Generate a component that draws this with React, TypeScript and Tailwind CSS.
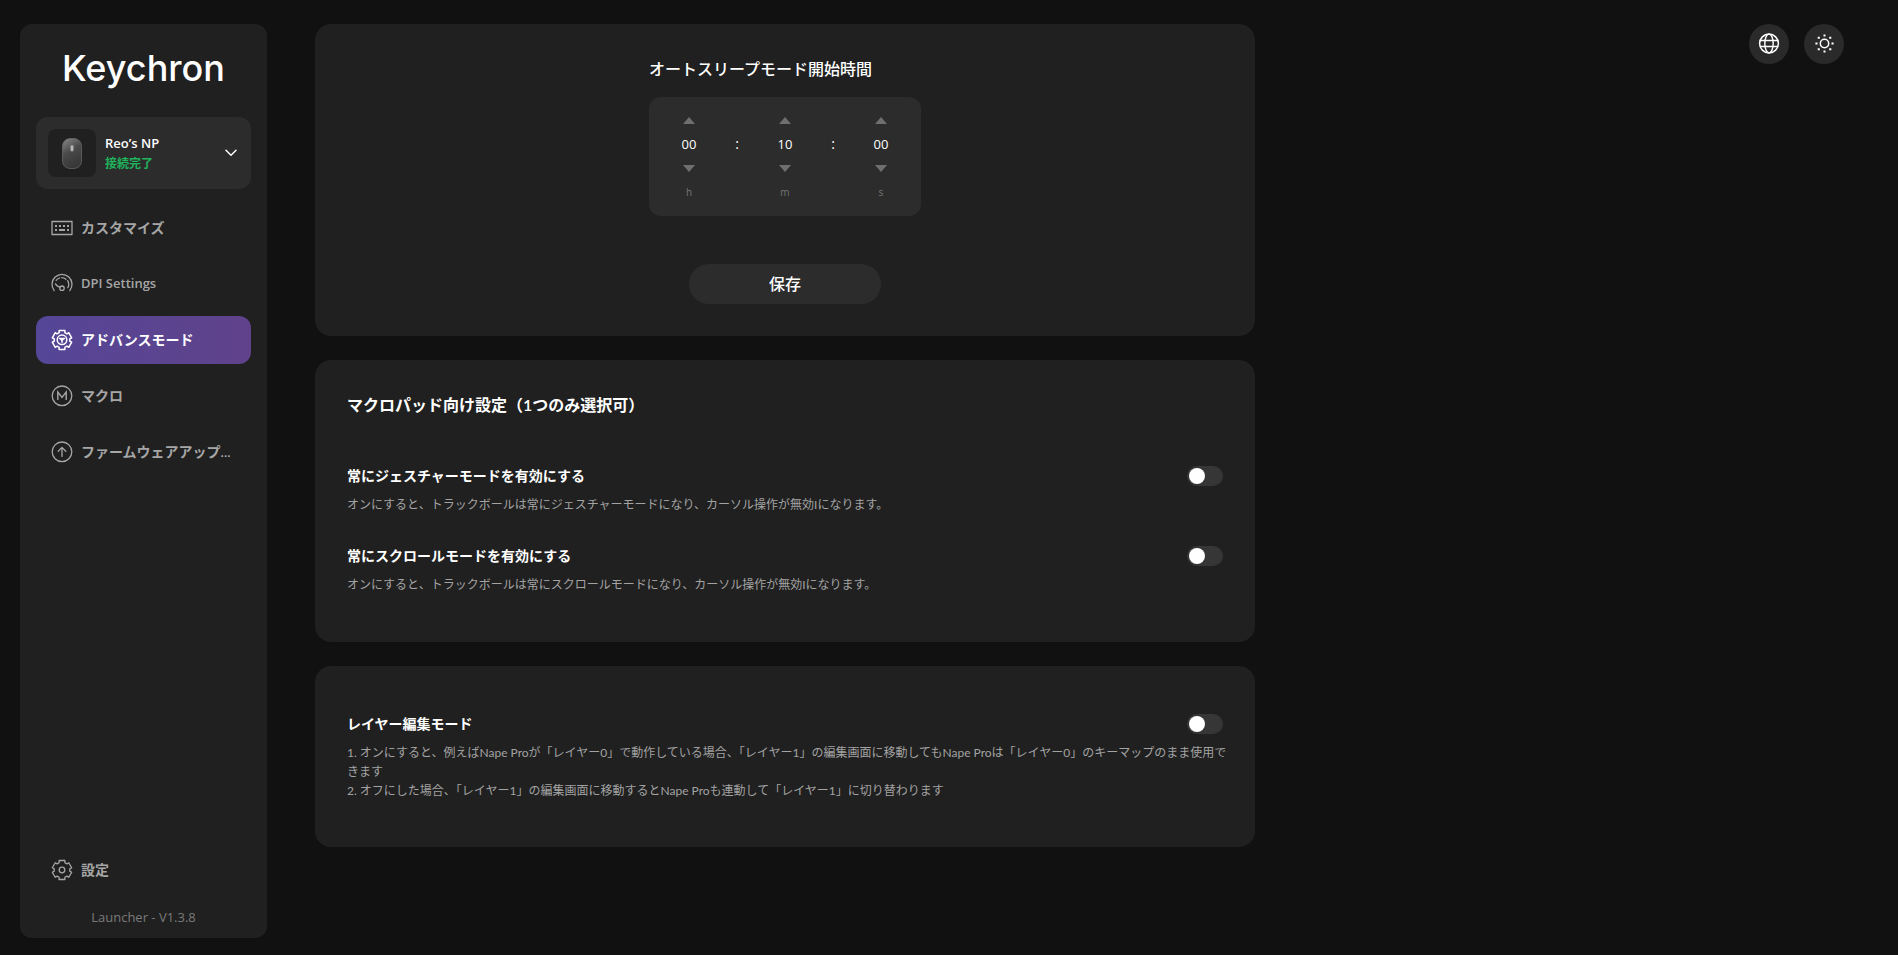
import React, { useState } from 'react';

const GEAR_PATH =
  'M8.1 1.5H13.9V3.7L15.87 4.84L17.78 3.74L20.68 8.76L18.77 9.86V12.14L20.68 13.24L17.78 18.26L15.87 17.16L13.9 18.3V20.5H8.1V18.3L6.13 17.16L4.22 18.26L1.32 13.24L3.23 12.14V9.86L1.32 8.76L4.22 3.74L6.13 4.84L8.1 3.7Z';

const Icon: React.FC<{ children: React.ReactNode }> = ({ children }) => (
  <svg
    viewBox="0 0 22 22"
    className="size-[22px] shrink-0"
    fill="none"
    stroke="currentColor"
    strokeWidth="1.3"
    strokeLinecap="round"
    strokeLinejoin="round"
    aria-hidden="true"
  >
    {children}
  </svg>
);

const KeyboardIcon = () => (
  <Icon>
    <rect x="1" y="4.5" width="20" height="13" />
    <path d="M4 9h2M8 9h2M12 9h2M16 9h2M4 13h2M8 13h6M16 13h2" strokeWidth="1.8" strokeLinecap="butt" />
  </Icon>
);

const GaugeIcon = () => (
  <Icon>
    <path d="M3.2 17.6a10 10 0 1 1 15.6 0" />
    <path d="M5.2 7.4a7 7 0 0 1 3.4-2.4M10.6 4.6a7 7 0 0 1 4.4 1.6M16.6 7.6a7 7 0 0 1 .2 7.2" />
    <circle cx="11" cy="15.2" r="2.2" />
    <path d="M4.4 10.8c.6 1.6 2.2 2.8 4.6 3.4" />
  </Icon>
);

const AdvancedIcon = () => (
  <Icon>
    <path d={GEAR_PATH} strokeWidth="1.5" />
    <circle cx="11" cy="10.8" r="4.8" strokeWidth="1.5" />
    <path d="M8.4 9.6h5.2M11 13.2V11M9.4 9.8l1.6 1.6 1.6-1.6" strokeWidth="1.5" />
  </Icon>
);

const MacroIcon = () => (
  <Icon>
    <circle cx="11" cy="10.8" r="9.8" />
    <path d="M6.8 14.4V7l4.2 5.4L15.2 7v7.4" strokeWidth="1.4" strokeLinejoin="miter" />
  </Icon>
);

const FirmwareIcon = () => (
  <Icon>
    <circle cx="11" cy="10.8" r="9.8" />
    <path d="M11 15.4V6.6M7.2 10.2L11 6.4l3.8 3.8" />
  </Icon>
);

const SettingsIcon = () => (
  <Icon>
    <path d={GEAR_PATH} />
    <circle cx="11" cy="11" r="2.8" />
  </Icon>
);

const GlobeIcon = () => (
  <Icon>
    <circle cx="11" cy="10.5" r="9.4" strokeWidth="1.5" />
    <ellipse cx="11" cy="10.5" rx="4.2" ry="9.4" strokeWidth="1.4" />
    <path d="M2.4 7.5h17.2M2.4 13.5h17.2" />
  </Icon>
);

const SunIcon = () => (
  <Icon>
    <circle cx="11.5" cy="10.5" r="4.2" strokeWidth="1.5" />
    <path
      d="M11.5 2.4v.1M11.5 18.5v.1M3.4 10.5h.1M19.5 10.5h.1M5.7 4.8h.1M17.2 4.8h.1M5.7 16.2h.1M17.2 16.2h.1"
      strokeWidth="2"
      strokeLinecap="square"
    />
  </Icon>
);

const MouseImage = () => (
  <svg viewBox="0 0 20 31" className="h-[31px] w-5" aria-hidden="true">
    <defs>
      <linearGradient id="mouse-body" x1="0" y1="0" x2="0.4" y2="1">
        <stop offset="0" stopColor="#8a8a8a" />
        <stop offset="0.5" stopColor="#4a4a4a" />
        <stop offset="1" stopColor="#383838" />
      </linearGradient>
    </defs>
    <rect x="0.5" y="0.5" width="19" height="30" rx="7.5" fill="url(#mouse-body)" stroke="#6b6b6b" strokeWidth="0.7" />
    <rect x="8.4" y="7" width="3.2" height="6.4" rx="1.6" fill="#b5b5b5" stroke="#777" strokeWidth="0.5" />
  </svg>
);

// Latin labels use Open Sans one step smaller so they sit level with the Japanese ones
const navItems: { label: string; icon: React.FC; active?: boolean; latin?: boolean }[] = [
  { label: 'カスタマイズ', icon: KeyboardIcon },
  { label: 'DPI Settings', icon: GaugeIcon, latin: true },
  { label: 'アドバンスモード', icon: AdvancedIcon, active: true },
  { label: 'マクロ', icon: MacroIcon },
  { label: 'ファームウェアアップ...', icon: FirmwareIcon },
];

const Arrow: React.FC<{ down?: boolean; label: string; onClick: () => void }> = ({ down, label, onClick }) => (
  <button type="button" aria-label={label} onClick={onClick} className="flex h-4 w-full items-center justify-center text-[#6f6f6f]">
    <svg viewBox="0 0 12 7" className="h-[7px] w-3" fill="currentColor" aria-hidden="true">
      <path d={down ? 'M0 0h12L6 7z' : 'M0 7h12L6 0z'} />
    </svg>
  </button>
);

interface TimeFieldProps {
  unit: string;
  label: string;
  initial: number;
  max: number;
}

const TimeField: React.FC<TimeFieldProps> = ({ unit, label, initial, max }) => {
  const [value, setValue] = useState(initial);
  const step = (n: number) => setValue(v => (v + n + max + 1) % (max + 1));

  return (
    <div className="flex w-12 flex-col items-center">
      <Arrow label={`${label} +`} onClick={() => step(1)} />
      <input
        type="text"
        aria-label={label}
        readOnly
        value={value.toString().padStart(2, '0')}
        className="my-1 h-6 w-full bg-transparent text-center text-[13px] text-white outline-none"
      />
      <Arrow down label={`${label} -`} onClick={() => step(-1)} />
      <span className="mt-2 text-[10px] leading-4 text-[#757575]">{unit}</span>
    </div>
  );
};

const Colon = () => <span className="mt-5 w-12 text-center text-sm leading-6">:</span>;

interface ToggleRowProps {
  id: string;
  title: string;
  lines: string[];
}

const ToggleRow: React.FC<ToggleRowProps> = ({ id, title, lines }) => {
  const [checked, setChecked] = useState(false);

  return (
    <div>
      <div className="flex items-center justify-between">
        <label htmlFor={id} className="text-sm leading-5 font-semibold">{title}</label>
        <input
          id={id}
          type="checkbox"
          role="switch"
          checked={checked}
          onChange={e => setChecked(e.target.checked)}
          className="flex h-5 w-9 cursor-pointer appearance-none items-center rounded-full bg-[#363636] px-0.5 before:block before:size-4 before:rounded-full before:bg-white before:transition-transform checked:bg-[#5b4391] checked:before:translate-x-4"
        />
      </div>
      <div className="mt-[9px] -mr-2 text-xs leading-[19px] text-[#a3a3a3]">
        {lines.map(line => (
          <p key={line}>{line}</p>
        ))}
      </div>
    </div>
  );
};

const Sidebar = () => (
  <aside className="flex w-[247px] shrink-0 flex-col rounded-xl bg-[#202020] px-4">
    <div className="mt-5 flex h-[73px] justify-center font-[Inter,sans-serif] text-[36px] leading-[48px] font-medium">Keychron</div>

    <button type="button" className="flex h-[72px] items-center gap-[9px] rounded-xl bg-[#2c2c2c] px-3 text-left">
      <span className="flex size-12 shrink-0 items-center justify-center rounded-lg bg-[#202020]">
        <MouseImage />
      </span>
      <span className="flex min-w-0 flex-1 flex-col">
        <span className="font-['Open_Sans',sans-serif] text-[13px] leading-[22px] font-semibold">Reo’s NP</span>
        <span className="text-xs leading-5 font-bold text-[#1fb35b]">接続完了</span>
      </span>
      <svg viewBox="0 0 12 8" className="mr-[2px] h-2 w-3" fill="none" stroke="currentColor" strokeWidth="1.5" strokeLinecap="round" aria-hidden="true">
        <path d="M1 1.2l5 5 5-5" />
      </svg>
    </button>

    <nav className="mt-[15px] flex flex-col gap-2">
      {navItems.map(({ label, icon: NavIcon, active, latin }) => (
        <a
          key={label}
          href="#"
          aria-current={active ? 'page' : undefined}
          className={`flex h-12 items-center gap-2 rounded-xl px-[15px] font-semibold ${
            active ? 'bg-linear-to-r from-[#554697] to-[#60428b] text-white' : 'text-[#a6a6a6]'
          } ${latin ? "font-['Open_Sans',sans-serif] text-[13px]" : 'text-sm'}`}
        >
          <NavIcon />
          <span className="whitespace-nowrap">{label}</span>
        </a>
      ))}
    </nav>

    <a href="#" className="mt-auto flex h-12 items-center gap-2 px-[15px] text-sm font-semibold text-[#a6a6a6]">
      <SettingsIcon />
      <span>設定</span>
    </a>
    <p className="mt-3 mb-[10px] text-center font-['Open_Sans',sans-serif] text-[13px] leading-[22px] text-[#7a7a7a]">
      Launcher - V1.3.8
    </p>
  </aside>
);

export default function App() {
  return (
    <div className="flex min-h-screen bg-[#111111] px-5 pt-6 pb-[17px] font-['Lato','Noto_Sans_CJK_JP',sans-serif] text-white">
      <Sidebar />

      <main className="ml-12 flex min-w-0 flex-1 flex-col gap-6">
        <section className="flex w-full max-w-[940px] flex-col items-center rounded-2xl bg-[#202020] py-8">
          <div>
            <h2 className="text-base leading-[25px] font-medium">オートスリープモード開始時間</h2>
            <div className="mt-4 flex h-[119px] items-start rounded-xl bg-[#2c2c2c] px-4 pt-[15px] font-['Open_Sans',sans-serif]">
              <TimeField unit="h" label="時間" initial={0} max={23} />
              <Colon />
              <TimeField unit="m" label="分" initial={10} max={59} />
              <Colon />
              <TimeField unit="s" label="秒" initial={0} max={59} />
            </div>
          </div>
          <button type="button" className="mt-12 h-10 w-48 rounded-full bg-[#2c2c2c] text-base font-medium">
            保存
          </button>
        </section>

        <section className="w-full max-w-[940px] rounded-2xl bg-[#202020] px-8 pt-8 pb-12">
          <h2 className="text-base leading-[25px] font-semibold">マクロパッド向け設定（1つのみ選択可）</h2>
          <div className="mt-[49px] flex flex-col gap-8">
            <ToggleRow
              id="gesture-mode"
              title="常にジェスチャーモードを有効にする"
              lines={['オンにすると、トラックボールは常にジェスチャーモードになり、カーソル操作が無効Iになります。']}
            />
            <ToggleRow
              id="scroll-mode"
              title="常にスクロールモードを有効にする"
              lines={['オンにすると、トラックボールは常にスクロールモードになり、カーソル操作が無効Iになります。']}
            />
          </div>
        </section>

        <section className="w-full max-w-[940px] rounded-2xl bg-[#202020] px-8 pt-12 pb-[47px]">
          <ToggleRow
            id="layer-mode"
            title="レイヤー編集モード"
            lines={[
              '1. オンにすると、例えばNape Proが「レイヤー0」で動作している場合、「レイヤー1」の編集画面に移動してもNape Proは「レイヤー0」のキーマップのまま使用できます',
              '2. オフにした場合、「レイヤー1」の編集画面に移動するとNape Proも連動して「レイヤー1」に切り替わります',
            ]}
          />
        </section>
      </main>

      <div className="mr-[34px] flex shrink-0 gap-[15px]">
        <button type="button" aria-label="言語" className="flex size-10 items-center justify-center rounded-full bg-[#2a2a2a]">
          <GlobeIcon />
        </button>
        <button type="button" aria-label="テーマ" className="flex size-10 items-center justify-center rounded-full bg-[#2a2a2a]">
          <SunIcon />
        </button>
      </div>
    </div>
  );
}
